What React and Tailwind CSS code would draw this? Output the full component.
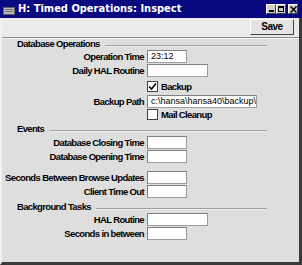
import React from "react";

const LBL = "font-['Liberation_Sans',sans-serif] text-[9.5px] font-bold tracking-[-0.65px]";

const Input = ({ w, value }) => (
  <div
    className={`h-[13px] bg-white border border-[#9c9c9c] border-t-[#808080] border-l-[#808080] pl-[3px] text-[9px] leading-[11px] font-normal font-['Liberation_Sans',sans-serif] text-black whitespace-nowrap overflow-hidden ${w}`}
  >
    {value}
  </div>
);

const Row = ({ label, w, value, className = "" }) => (
  <div className={`flex h-[13px] items-center ${className}`}>
    <div className={`w-[142px] text-right leading-[13px] whitespace-nowrap ${LBL}`}>{label}</div>
    <div className="ml-[3px]">
      <Input w={w} value={value} />
    </div>
  </div>
);

const Check = ({ label, checked, className = "" }) => (
  <div className={`flex h-[11px] items-center ${className}`}>
    <div className="w-[142px]" />
    <div className="ml-[3px] w-[11px] h-[11px] bg-white border border-[#404040] flex items-center justify-center">
      {checked && (
        <svg width="9" height="9" viewBox="0 0 9 9">
          <path d="M1 4.5 L3.5 7 L8 1.5" stroke="#000" strokeWidth="1.6" fill="none" />
        </svg>
      )}
    </div>
    <div className={`ml-[3px] leading-[11px] ${LBL}`}>{label}</div>
  </div>
);

const Header = ({ label, className = "" }) => (
  <div className={`flex items-center h-[10px] pl-[15px] pr-[32px] ${className}`}>
    <div className={`leading-[10px] whitespace-nowrap ${LBL}`}>{label}</div>
    <div className="flex-1 ml-[5px] mt-[4px] h-[2px] border-t border-[#a0a0a0] border-b border-b-[#eeeeee]" />
  </div>
);

const TitleBtn = ({ children }) => (
  <div className="w-[10px] h-[10px] bg-[#d4d0c8] border border-t-white border-l-white border-r-[#404040] border-b-[#404040] flex items-center justify-center">
    {children}
  </div>
);

export default function App() {
  return (
    <div className="w-[302px] h-[265px] flex flex-col overflow-hidden bg-[#dedede] text-black font-['DejaVu_Sans_Condensed','Liberation_Sans',sans-serif]">
      {/* Title bar */}
      <div className="h-[18px] bg-[#0a0a80] flex items-center shrink-0">
        <div className="ml-[3px] w-[12px] h-[8px] mt-[3px] bg-[#b8b8b8] border border-[#606060] flex flex-col justify-center gap-[1px] px-[1px]">
          <div className="h-[1px] bg-[#707070]" />
          <div className="h-[1px] bg-[#707070]" />
        </div>
        <div className="ml-[3px] text-white text-[11px] font-bold leading-[18px] whitespace-nowrap">
          H: Timed Operations: Inspect
        </div>
        <div className="ml-auto mr-[4px] flex items-center">
          <TitleBtn>
            <div className="w-[5px] h-[2px] bg-black mt-[4px]" />
          </TitleBtn>
          <TitleBtn>
            <div className="w-[6px] h-[6px] border border-black border-t-2" />
          </TitleBtn>
          <div className="w-[2px]" />
          <TitleBtn>
            <svg width="7" height="7" viewBox="0 0 7 7">
              <path d="M0.5 0.5 L6.5 6.5 M6.5 0.5 L0.5 6.5" stroke="#000" strokeWidth="1.5" />
            </svg>
          </TitleBtn>
        </div>
      </div>

      {/* Window body */}
      <div className="flex-1 flex flex-col border-l-2 border-l-[#f2f2f2] border-r-[3px] border-r-[#3a3a3a] border-b-[3px] border-b-[#3a3a3a]">
        {/* Toolbar */}
        <div className="h-[19px] bg-[#ebebeb] flex items-start justify-end pr-[5px] shrink-0">
          <div className="mt-[1px] w-[44px] h-[16px] bg-[#e4e4e4] border border-t-white border-l-white border-r-[#404040] border-b-[#404040] flex items-center justify-center leading-[14px] font-['Liberation_Sans',sans-serif] font-bold text-[10px] tracking-[-0.5px]">
            Save
          </div>
        </div>
        <div className="h-[2px] border-t border-t-[#8a8a8a] border-b border-b-[#f6f6f6] shrink-0" />

        {/* Content */}
        <div className="flex-1 flex flex-col">
          <Header label="Database Operations" />
          <Row label="Operation Time" w="w-[40px]" value="23:12" className="mt-[1px]" />
          <Row label="Daily HAL Routine" w="w-[61px]" value="" className="mt-[1px]" />
          <Check label="Backup" checked className="mt-[4px]" />
          <Row label="Backup Path" w="w-[110px]" value="c:\hansa\hansa40\backup\" className="mt-[3px]" />
          <Check label="Mail Cleanup" className="mt-[1px]" />
          <Header label="Events" className="mt-[4px]" />
          <Row label="Database Closing Time" w="w-[40px]" value="" className="mt-[2px]" />
          <Row label="Database Opening Time" w="w-[40px]" value="" className="mt-[1px]" />
          <Row label="Seconds Between Browse Updates" w="w-[40px]" value="" className="mt-[8px]" />
          <Row label="Client Time Out" w="w-[40px]" value="" className="mt-[1px]" />
          <Header label="Background Tasks" className="mt-[4px]" />
          <Row label="HAL Routine" w="w-[61px]" value="" className="mt-[1px]" />
          <Row label="Seconds in between" w="w-[40px]" value="" className="mt-[1px]" />
        </div>
      </div>
    </div>
  );
}
